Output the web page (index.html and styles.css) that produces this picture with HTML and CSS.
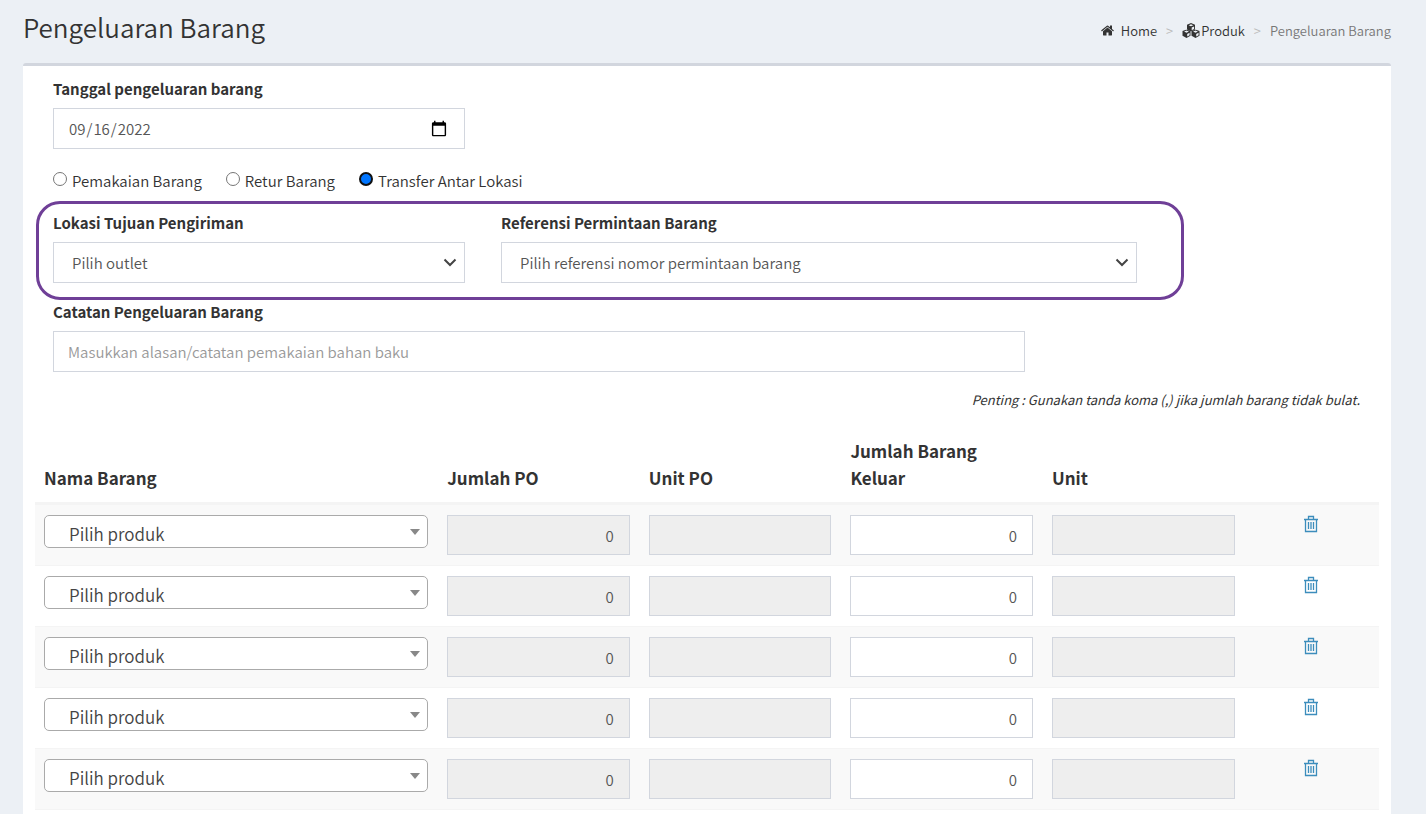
FILE: index.html
```html
<!DOCTYPE html>
<html lang="id">
<head>
<meta charset="utf-8">
<meta name="viewport" content="width=device-width, initial-scale=1">
<title>Pengeluaran Barang</title>
<link rel="stylesheet" href="styles.css">
</head>
<body>
<svg class="sprite" aria-hidden="true">
  <symbol id="trash" viewBox="0 0 16 18">
    <path d="M1 4.5h14M5.5 4V1.500h5V4M2.500 4.500V16.500h11V4.500M5.500 7v7M8 7v7M10.500 7v7" fill="none" stroke="currentColor" stroke-width="1.300"/>
  </symbol>
  <symbol id="home" viewBox="0 0 1664 1408">
    <path d="M1408 800v480q0 26-19 45t-45 19H960V960H704v384H320q-26 0-45-19t-19-45V800q0-1 .5-3t.5-3l575-474 575 474q1 2 1 6zm223-69l-62 74q-8 9-21 11h-3q-13 0-21-7L832 232 140 809q-12 8-24 7-13-2-21-11l-62-74q-8-10-7-23.500T37 686l719-599q32-26 76-26t76 26l244 204V96q0-14 9-23t23-9h192q14 0 23 9t9 23v408l219 182q10 8 11 21.500t-7 23.500z" fill="currentColor"/>
  </symbol>
  <symbol id="cube" viewBox="0 0 18 18">
    <path d="M9 0 17.500 3.500v10L9 18 .5 13.500v-10z" fill="currentColor"/>
    <path d="M4 4.500 9 6.800 14 4.500 9 2.500z" fill="#ecf0f5"/>
    <path d="M10.500 9.500 15.500 7v5.300l-5 2.700z" fill="#ecf0f5"/>
  </symbol>
  <symbol id="cubes" viewBox="0 0 34 28">
    <use href="#cube" x="9" y="0" width="16" height="16"/>
    <use href="#cube" x="0" y="12" width="17" height="16"/>
    <use href="#cube" x="17" y="12" width="17" height="16"/>
  </symbol>
</svg>
<div class="page">
  <header class="page-header">
    <h1>Pengeluaran Barang</h1>
    <nav aria-label="Breadcrumb">
      <ol class="breadcrumb">
        <li><a class="home" href="#"><svg class="icon-home"><use href="#home"/></svg>Home</a></li>
        <li><a href="#"><svg class="icon-cubes"><use href="#cubes"/></svg>Produk</a></li>
        <li class="current" aria-current="page">Pengeluaran Barang</li>
      </ol>
    </nav>
  </header>

  <main class="card">
    <form>
      <div class="row">
        <div class="field col-4">
          <label for="tanggal">Tanggal pengeluaran barang</label>
          <input class="control date" type="date" id="tanggal" value="2022-09-16">
        </div>
      </div>
      <div class="radios" role="radiogroup" aria-label="Jenis pengeluaran">
        <label><input type="radio" name="jenis">Pemakaian Barang</label>
        <label><input type="radio" name="jenis">Retur Barang</label>
        <label><input type="radio" name="jenis" checked>Transfer Antar Lokasi</label>
      </div>
      <div class="row transfer">
        <div class="field col-4">
          <label for="outlet">Lokasi Tujuan Pengiriman</label>
          <select class="control" id="outlet"><option>Pilih outlet</option></select>
        </div>
        <div class="field col-6">
          <label for="referensi">Referensi Permintaan Barang</label>
          <select class="control" id="referensi"><option>Pilih referensi nomor permintaan barang</option></select>
        </div>
      </div>
      <div class="row">
        <div class="field col-9">
          <label for="catatan">Catatan Pengeluaran Barang</label>
          <input class="control" type="text" id="catatan" placeholder="Masukkan alasan/catatan pemakaian bahan baku">
        </div>
      </div>
      <p class="hint">Penting : Gunakan tanda koma (,) jika jumlah barang tidak bulat.</p>

      <table class="items">
        <thead>
          <tr><th class="name">Nama Barang</th><th>Jumlah PO</th><th>Unit PO</th><th>Jumlah Barang Keluar</th><th>Unit</th><th class="action"></th></tr>
        </thead>
        <tbody>
          <tr>
            <td><div class="product"><select aria-label="Nama Barang"><option>Pilih produk</option></select></div></td>
            <td><input class="control number" type="text" value="0" disabled aria-label="Jumlah PO"></td>
            <td><input class="control" type="text" disabled aria-label="Unit PO"></td>
            <td><input class="control number" type="text" value="0" aria-label="Jumlah Barang Keluar"></td>
            <td><input class="control" type="text" disabled aria-label="Unit"></td>
            <td class="action"><button type="button" aria-label="Hapus"><svg><use href="#trash"/></svg></button></td>
          </tr>
          <tr>
            <td><div class="product"><select aria-label="Nama Barang"><option>Pilih produk</option></select></div></td>
            <td><input class="control number" type="text" value="0" disabled aria-label="Jumlah PO"></td>
            <td><input class="control" type="text" disabled aria-label="Unit PO"></td>
            <td><input class="control number" type="text" value="0" aria-label="Jumlah Barang Keluar"></td>
            <td><input class="control" type="text" disabled aria-label="Unit"></td>
            <td class="action"><button type="button" aria-label="Hapus"><svg><use href="#trash"/></svg></button></td>
          </tr>
          <tr>
            <td><div class="product"><select aria-label="Nama Barang"><option>Pilih produk</option></select></div></td>
            <td><input class="control number" type="text" value="0" disabled aria-label="Jumlah PO"></td>
            <td><input class="control" type="text" disabled aria-label="Unit PO"></td>
            <td><input class="control number" type="text" value="0" aria-label="Jumlah Barang Keluar"></td>
            <td><input class="control" type="text" disabled aria-label="Unit"></td>
            <td class="action"><button type="button" aria-label="Hapus"><svg><use href="#trash"/></svg></button></td>
          </tr>
          <tr>
            <td><div class="product"><select aria-label="Nama Barang"><option>Pilih produk</option></select></div></td>
            <td><input class="control number" type="text" value="0" disabled aria-label="Jumlah PO"></td>
            <td><input class="control" type="text" disabled aria-label="Unit PO"></td>
            <td><input class="control number" type="text" value="0" aria-label="Jumlah Barang Keluar"></td>
            <td><input class="control" type="text" disabled aria-label="Unit"></td>
            <td class="action"><button type="button" aria-label="Hapus"><svg><use href="#trash"/></svg></button></td>
          </tr>
          <tr>
            <td><div class="product"><select aria-label="Nama Barang"><option>Pilih produk</option></select></div></td>
            <td><input class="control number" type="text" value="0" disabled aria-label="Jumlah PO"></td>
            <td><input class="control" type="text" disabled aria-label="Unit PO"></td>
            <td><input class="control number" type="text" value="0" aria-label="Jumlah Barang Keluar"></td>
            <td><input class="control" type="text" disabled aria-label="Unit"></td>
            <td class="action"><button type="button" aria-label="Hapus"><svg><use href="#trash"/></svg></button></td>
          </tr>
        </tbody>
      </table>
    </form>
  </main>
</div>
</body>
</html>
```
FILE: styles.css
```css
* {
  box-sizing: border-box;
}

body {
  margin: 0;
  background: #ecf0f5;
  color: #333;
  font-family: "Noto Sans CJK SC", "Noto Sans", sans-serif;
  font-size: 15px;
  font-weight: 350;
  line-height: 24px;
}

input,
select,
button {
  font: inherit;
}

.sprite {
  position: absolute;
  width: 0;
  height: 0;
}

.page {
  display: flex;
  flex-direction: column;
  min-height: 100vh;
  padding: 0 35px 0 23px;
}

.page-header {
  display: flex;
  align-items: center;
  justify-content: space-between;
  height: 63px;
  padding-bottom: 9px;
}

h1 {
  margin: 0;
  font-size: 26px;
  font-weight: 350;
  line-height: 32px;
}

.breadcrumb {
  display: flex;
  margin: 0;
  padding: 7px 0 0;
  list-style: none;
  font-size: 13px;
  line-height: 20px;
}

.breadcrumb li {
  display: flex;
}

.breadcrumb li + li::before {
  content: ">";
  padding: 0 9px;
  color: #bbb;
}

.breadcrumb a {
  display: flex;
  align-items: center;
  gap: 1px;
  color: #333;
  text-decoration: none;
}

.breadcrumb .home {
  gap: 7px;
}

.breadcrumb .current {
  color: #777;
}

.icon-home {
  width: 13px;
  height: 11px;
}

.icon-cubes {
  width: 18px;
  height: 15px;
}

.card {
  flex: 1;
  padding: 11px 12px 0;
  border-top: 3px solid #d2d6de;
  border-radius: 3px 3px 0 0;
  background: #fff;
}

.row {
  display: grid;
  grid-template-columns: repeat(12, 1fr);
}

.col-4 {
  grid-column: span 4;
}

.col-6 {
  grid-column: span 6;
}

.col-9 {
  grid-column: span 9;
}

.field {
  padding: 0 18px;
}

.field label {
  display: block;
  margin-bottom: 7px;
  font-weight: 700;
}

.control {
  display: block;
  width: 100%;
  height: 41px;
  padding: 0 14px;
  border: 1px solid #d2d6de;
  border-radius: 0;
  background: #fff;
  color: #555;
}

.control::placeholder {
  color: #999;
}

.control:disabled {
  background: #eee;
}

select.control {
  padding: 0 32px 0 18px;
  appearance: none;
  background: #fff url("data:image/svg+xml,%3Csvg xmlns='http://www.w3.org/2000/svg' width='14' height='9'%3E%3Cpath d='M1.500 1.500 7 7l5.500-5.500' fill='none' stroke='%23444' stroke-width='2'/%3E%3C/svg%3E") no-repeat right 7px center;
}

.date {
  padding-right: 16px;
}

.date::-webkit-calendar-picker-indicator {
  width: 18px;
  height: 18px;
  padding: 0;
}

.radios {
  display: flex;
  gap: 24px;
  padding: 20px 18px 18px;
}

.radios label {
  display: flex;
  gap: 5px;
}

.radios input {
  width: 14px;
  height: 14px;
  margin: 3px 0 0;
  appearance: none;
  border: 1px solid #767676;
  border-radius: 50%;
  background: #fff;
}

.radios input:checked {
  border: 2px solid #101010;
  background: #0075ff;
}

.transfer {
  position: relative;
  margin-bottom: 17px;
}

.transfer::after {
  content: "";
  position: absolute;
  inset: -10px calc(100% / 6 - 29px) -17px 1px;
  border: 3px solid #6f3f97;
  border-radius: 24px;
  pointer-events: none;
}

.hint {
  margin: 16px 19px 17px;
  font-size: 13px;
  font-style: italic;
  font-weight: 400;
  text-align: right;
}

.items {
  width: 100%;
  border-collapse: separate;
  border-spacing: 0;
  table-layout: fixed;
}

.items th {
  width: 15%;
  padding: 8px 9px 11px;
  border-bottom: 3px solid #f4f4f4;
  font-size: 17px;
  font-weight: 700;
  line-height: 27px;
  text-align: left;
  vertical-align: bottom;
}

.items .name {
  width: 30%;
}

.items .action {
  width: 10%;
  text-align: center;
}

.items td {
  padding: 10px 10px 10px 9px;
  border-bottom: 1px solid #f4f4f4;
  vertical-align: top;
}

.items tbody tr:nth-child(odd) {
  background: #f9f9f9;
}

.items .control {
  height: 40px;
}

.number {
  padding-right: 15px;
  text-align: right;
}

.product {
  position: relative;
}

.product select {
  display: block;
  width: 100%;
  height: 33px;
  padding: 4px 24px 0;
  appearance: none;
  border: 1px solid #aaa;
  border-radius: 5px;
  background: #fff;
  color: #444;
  font-size: 17px;
  line-height: 27px;
}

.product::after {
  content: "";
  position: absolute;
  top: 14px;
  right: 8px;
  border: 5px solid transparent;
  border-top: 6px solid #888;
  border-bottom: 0;
  pointer-events: none;
}

.items button {
  padding: 0;
  border: 0;
  background: none;
  color: #3c8dbc;
  cursor: pointer;
}

.items svg {
  display: block;
  width: 16px;
  height: 18px;
}
```
